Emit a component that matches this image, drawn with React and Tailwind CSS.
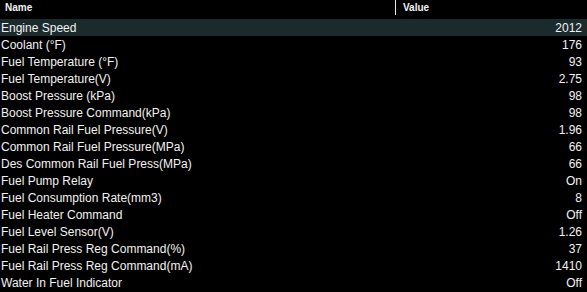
const rows = [
  ['Engine Speed', '2012'],
  ['Coolant (°F)', '176'],
  ['Fuel Temperature (°F)', '93'],
  ['Fuel Temperature(V)', '2.75'],
  ['Boost Pressure (kPa)', '98'],
  ['Boost Pressure Command(kPa)', '98'],
  ['Common Rail Fuel Pressure(V)', '1.96'],
  ['Common Rail Fuel Pressure(MPa)', '66'],
  ['Des Common Rail Fuel Press(MPa)', '66'],
  ['Fuel Pump Relay', 'On'],
  ['Fuel Consumption Rate(mm3)', '8'],
  ['Fuel Heater Command', 'Off'],
  ['Fuel Level Sensor(V)', '1.26'],
  ['Fuel Rail Press Reg Command(%)', '37'],
  ['Fuel Rail Press Reg Command(mA)', '1410'],
  ['Water In Fuel Indicator', 'Off'],
]

export default function App() {
  return (
    <div className="w-[587px] h-[292px] overflow-hidden bg-black text-[12px] text-[#f2f2f2] font-['Liberation_Sans',Arial,sans-serif]">
      {/* header */}
      <div className="flex h-[19px] items-start text-[10px] leading-[10px] font-bold">
        <div className="w-[395px] pl-[5px] pt-[3px]">Name</div>
        <div className="w-px h-[15px] bg-[#e8e8e8]" />
        <div className="pl-[7px] pt-[3px]">Value</div>
      </div>
      {rows.map(([name, value], i) => (
        <div
          key={name}
          className={`flex h-[17px] items-center justify-between pl-[1px] pr-[5px] ${i === 0 ? 'bg-[#1b2b2d]' : ''}`}
        >
          <span>{name}</span>
          <span>{value}</span>
        </div>
      ))}
    </div>
  )
}
